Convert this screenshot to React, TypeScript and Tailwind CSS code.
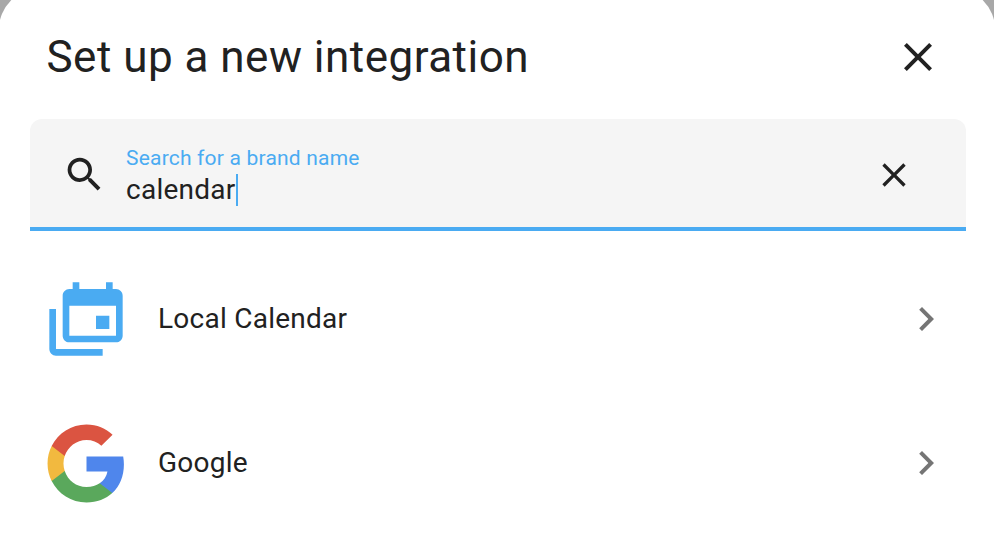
const ink = "#212121";
const blue = "#4aabf2";

function MdiIcon({ d, className, fill }: { d: string; className: string; fill: string }) {
  return (
    <svg viewBox="0 0 24 24" className={className} fill={fill}>
      <path d={d} />
    </svg>
  );
}

const CLOSE = "M19 6.41L17.59 5 12 10.59 6.41 5 5 6.41 10.59 12 5 17.59 6.41 19 12 13.41 17.59 19 19 17.59 13.41 12z";
const SEARCH = "M9.5 3A6.5 6.5 0 0 1 16 9.5c0 1.61-.59 3.09-1.56 4.23l.27.27h.79l5 5-1.5 1.5-5-5v-.79l-.27-.27A6.516 6.516 0 0 1 9.5 16 6.5 6.5 0 0 1 3 9.5 6.5 6.5 0 0 1 9.5 3m0 2C7 5 5 7 5 9.5S7 14 9.5 14 14 12 14 9.5 12 5 9.5 5z";
const CHEVRON = "M8.59 16.58L13.17 12 8.59 7.41 10 6l6 6-6 6-1.41-1.42z";
const CALENDAR = "M21 17V8H7V17H21M21 3C22.1 3 23 3.9 23 5V17C23 18.1 22.1 19 21 19H7C5.89 19 5 18.1 5 17V5C5 3.89 5.9 3 7 3H8V1H10V3H18V1H20V3H21M3 21H17V23H3C1.89 23 1 22.1 1 21V9H3V21M19 15H15V11H19V15Z";

function GoogleLogo() {
  return (
    <svg viewBox="0 0 48 48" className="h-[85px] w-[85px] shrink-0">
      <path fill="#4f86ec" d="M45.12 24.5c0-1.56-.14-3.06-.4-4.5H24v8.51h11.84c-.51 2.75-2.06 5.08-4.39 6.64v5.52h7.11c4.16-3.83 6.56-9.47 6.56-16.17z" />
      <path fill="#5aa85c" d="M24 46c5.94 0 10.92-1.97 14.56-5.33l-7.11-5.52c-1.97 1.32-4.49 2.1-7.45 2.1-5.73 0-10.58-3.87-12.31-9.07H4.34v5.7C7.96 41.07 15.4 46 24 46z" />
      <path fill="#f2b93f" d="M11.69 28.18C11.25 26.86 11 25.45 11 24s.25-2.86.69-4.18v-5.7H4.34C2.85 17.09 2 20.45 2 24s.85 6.91 2.34 9.88l7.35-5.7z" />
      <path fill="#db5441" d="M24 10.75c3.23 0 6.13 1.11 8.41 3.29l6.31-6.31C34.91 4.18 29.93 2 24 2 15.4 2 7.96 6.93 4.34 14.12l7.35 5.7c1.73-5.2 6.58-9.07 12.31-9.07z" />
    </svg>
  );
}

function Row({ icon, label }: { icon: React.ReactNode; label: string }) {
  return (
    <div className="flex h-[144px] items-center pl-[47px] pr-[45px]">
      <div className="flex h-[80px] w-[80px] shrink-0 items-center justify-center">{icon}</div>
      <div className="ml-[32px] flex-1 text-[28px] tracking-[0.25px] text-[#212121]">{label}</div>
      <MdiIcon d={CHEVRON} fill="#757575" className="h-[48px] w-[48px]" />
    </div>
  );
}

export default function App() {
  return (
    <div className="h-[534px] w-[994px] overflow-hidden bg-[#a8a8a8] font-['Roboto',sans-serif]">
      <div className="-mx-px -mt-[11px] h-[545px] rounded-t-[40px] bg-white">
        <div className="flex h-[130px] items-center pl-[47.5px] pr-[53px] pt-[6px]">
          <h1 className="flex-1 text-[44px] font-normal leading-[52px] tracking-[0.48px]" style={{ color: ink }}>
            Set up a new integration
          </h1>
          <MdiIcon d={CLOSE} fill={ink} className="h-[48px] w-[48px]" />
        </div>
        <div className="ml-[31px] mr-[29px] flex h-[112px] items-center rounded-t-[12px] border-b-[4px] border-[#4aabf2] bg-[#f5f5f5] pl-[32px] pr-[52px] pt-[3px]">
          <MdiIcon d={SEARCH} fill={ink} className="h-[45px] w-[45px]" />
          <div className="ml-[19px] flex-1 pt-[5px]">
            <div className="text-[21px] leading-[24px] tracking-[0.2px]" style={{ color: blue }}>
              Search for a brand name
            </div>
            <div className="flex h-[38px] items-center pt-[1px] text-[28px] tracking-[0.25px]" style={{ color: ink }}>
              calendar
              <span className="h-[32px] w-[2px] bg-[#4aabf2]" />
            </div>
          </div>
          <MdiIcon d={CLOSE} fill={ink} className="h-[40px] w-[40px]" />
        </div>
        <div className="pt-[16px]">
          <Row icon={<MdiIcon d={CALENDAR} fill={blue} className="h-[80px] w-[80px]" />} label="Local Calendar" />
          <Row icon={<GoogleLogo />} label="Google" />
        </div>
      </div>
    </div>
  );
}
